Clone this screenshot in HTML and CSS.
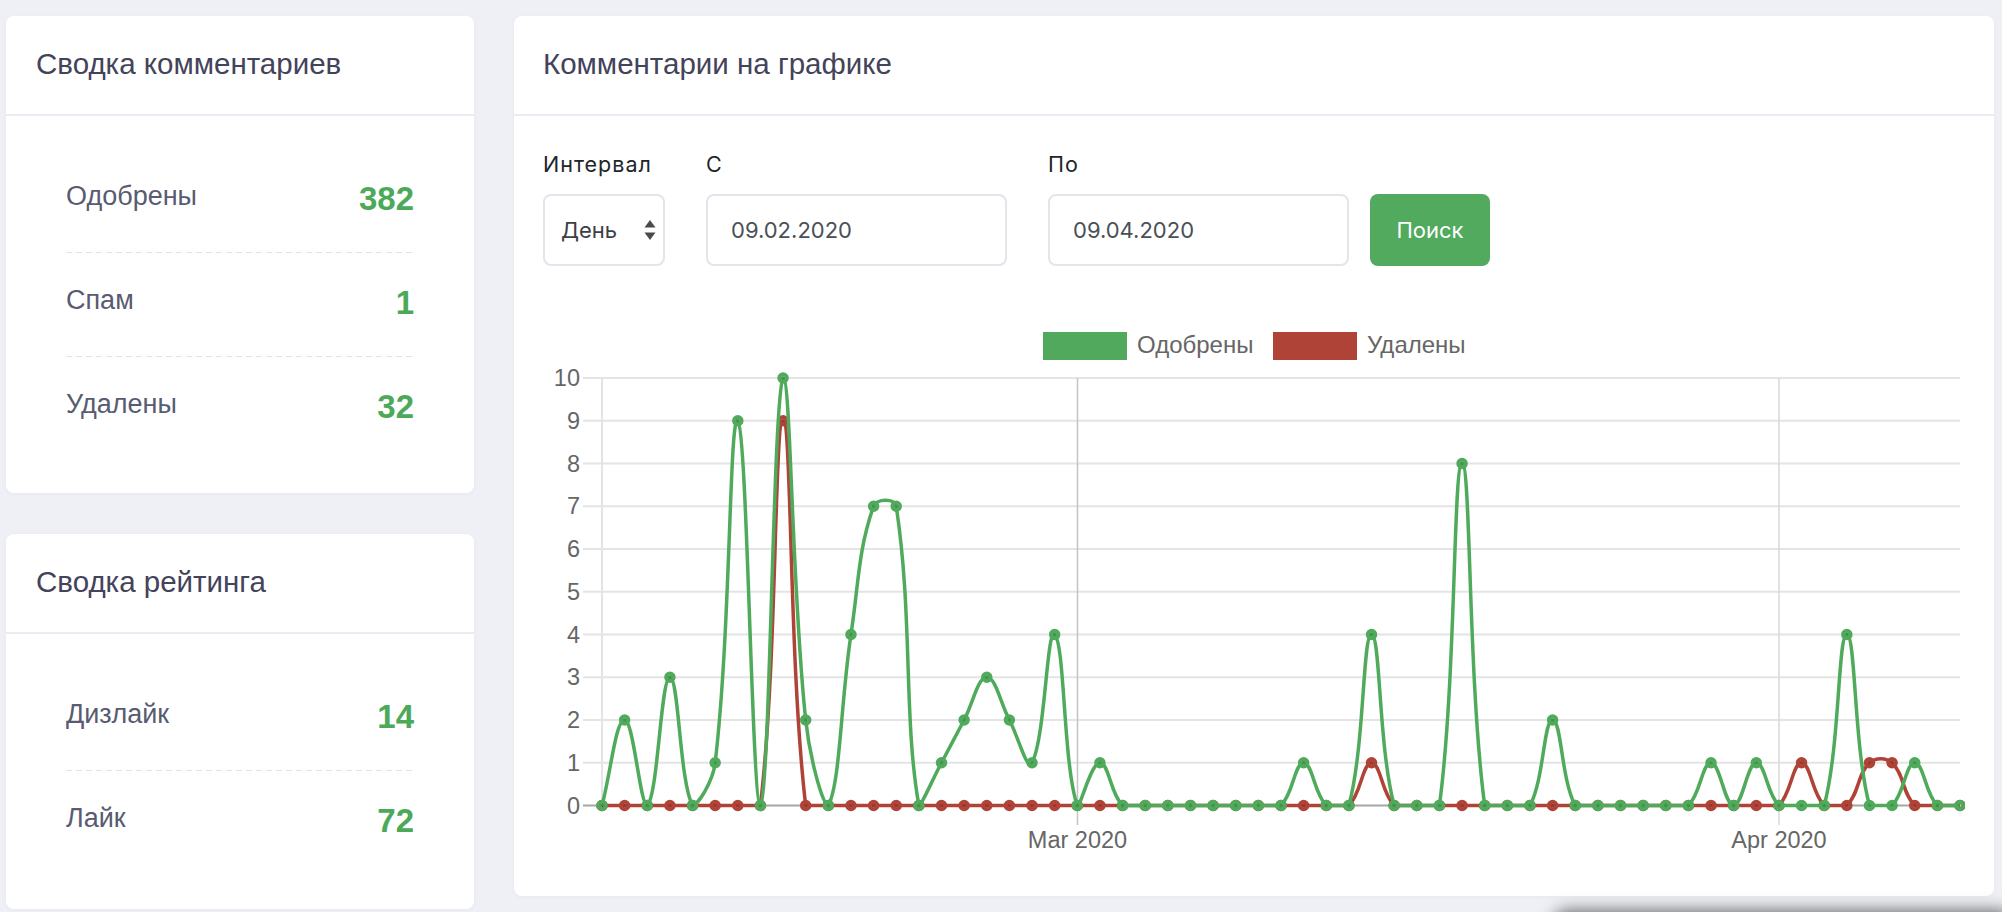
FILE: index.html
```html
<!DOCTYPE html>
<html lang="ru">
<head>
<meta charset="utf-8">
<title>Статистика комментариев</title>
<link rel="stylesheet" href="styles.css">
</head>
<body>
<div class="page">
  <aside class="side">
    <section class="card">
      <header class="card-header"><h2 class="card-title">Сводка комментариев</h2></header>
      <div class="stats">
        <div class="stat"><span class="stat-label">Одобрены</span><span class="stat-value">382</span></div>
        <div class="stat"><span class="stat-label">Спам</span><span class="stat-value">1</span></div>
        <div class="stat"><span class="stat-label">Удалены</span><span class="stat-value">32</span></div>
      </div>
    </section>
    <section class="card">
      <header class="card-header"><h2 class="card-title">Сводка рейтинга</h2></header>
      <div class="stats stats-rating">
        <div class="stat"><span class="stat-label">Дизлайк</span><span class="stat-value">14</span></div>
        <div class="stat"><span class="stat-label">Лайк</span><span class="stat-value">72</span></div>
      </div>
    </section>
  </aside>

  <main class="card card-chart">
    <header class="card-header card-header-wide"><h2 class="card-title">Комментарии на графике</h2></header>
    <div class="chart-body">
      <form class="filters">
        <div class="field field-interval">
          <label class="field-label">Интервал</label>
          <div class="control select">
            <span>День</span>
            <svg class="select-arrows" width="12" height="20" viewBox="0 0 12 20"><polygon points="6,0 11.5,7.5 0.5,7.5" fill="#4a4a4a"/><polygon points="0.5,12.5 11.5,12.5 6,20" fill="#4a4a4a"/></svg>
          </div>
        </div>
        <div class="field field-from">
          <label class="field-label">С</label>
          <input class="control input" type="text" value="09.02.2020">
        </div>
        <div class="field field-to">
          <label class="field-label">По</label>
          <input class="control input" type="text" value="09.04.2020">
        </div>
        <button class="btn-search" type="button">Поиск</button>
      </form>

      <div class="chart">
        <svg class="chart-svg" width="1422" height="560" viewBox="543 310 1422 560">
          <g class="legend">
            <rect x="1043" y="332" width="84" height="28" fill="#51a95d"/>
            <text class="tick legend-text" x="1137" y="353">Одобрены</text>
            <rect x="1273" y="332" width="84" height="28" fill="#b04337"/>
            <text class="tick legend-text" x="1367" y="353">Удалены</text>
          </g>
          <g class="grid">
            <line x1="583" x2="1960" y1="378" y2="378"/>
            <line x1="583" x2="1960" y1="420.75" y2="420.75"/>
            <line x1="583" x2="1960" y1="463.5" y2="463.5"/>
            <line x1="583" x2="1960" y1="506.25" y2="506.25"/>
            <line x1="583" x2="1960" y1="549" y2="549"/>
            <line x1="583" x2="1960" y1="591.75" y2="591.75"/>
            <line x1="583" x2="1960" y1="634.5" y2="634.5"/>
            <line x1="583" x2="1960" y1="677.25" y2="677.25"/>
            <line x1="583" x2="1960" y1="720" y2="720"/>
            <line x1="583" x2="1960" y1="762.75" y2="762.75"/>
            <line x1="602" x2="602" y1="378" y2="805.5"/>
          </g>
          <line class="major major-mar" x1="1077.5" x2="1077.5" y1="378" y2="825"/>
          <line class="major major-apr" x1="1779" x2="1779" y1="378" y2="825"/>
          <line class="zero" x1="583" x2="1960" y1="805.5" y2="805.5"/>
          <g class="ticks-y">
            <text class="tick" x="580" y="386">10</text>
            <text class="tick" x="580" y="428.75">9</text>
            <text class="tick" x="580" y="471.5">8</text>
            <text class="tick" x="580" y="514.25">7</text>
            <text class="tick" x="580" y="557">6</text>
            <text class="tick" x="580" y="599.75">5</text>
            <text class="tick" x="580" y="642.5">4</text>
            <text class="tick" x="580" y="685.25">3</text>
            <text class="tick" x="580" y="728">2</text>
            <text class="tick" x="580" y="770.75">1</text>
            <text class="tick" x="580" y="813.5">0</text>
          </g>
          <g class="ticks-x">
            <text class="tick" x="1077.5" y="848">Mar 2020</text>
            <text class="tick" x="1779" y="848">Apr 2020</text>
          </g>
          <g id="series"></g>
        </svg>
      </div>
    </div>
  </main>
</div>
<div class="float-shadow"></div>
<script src="chart-render.js"></script>
</body>
</html>
```

FILE: styles.css
```css
html, body {
  margin: 0;
  height: 100%;
  overflow: hidden;
}

body {
  background: #eff0f5;
  font-family: "Liberation Sans", Arial, Helvetica, sans-serif;
  color: #44445a;
}

.page {
  display: flex;
  align-items: flex-start;
  gap: 40px;
  padding: 16px 8px 0 6px;
}

.side {
  flex: none;
  width: 468px;
  display: flex;
  flex-direction: column;
  gap: 41px;
}

.card {
  background: #fff;
  border-radius: 8px;
  box-shadow: 0 1px 5px rgba(40, 40, 80, 0.04);
}

.card-header {
  padding: 31px 30px 33px;
  border-bottom: 2px solid #ebecf3;
}

.card-header-wide {
  padding-left: 29px;
}

.card-title {
  margin: 0;
  font-size: 29.5px;
  line-height: 34px;
  font-weight: 400;
  color: #43435a;
}

.stats {
  padding: 33px 60px 33px;
}

.stats-rating {
  padding-bottom: 35px;
}

.stat {
  display: flex;
  justify-content: space-between;
  align-items: flex-start;
  padding: 31px 0 40px;
}

.stat + .stat {
  padding-top: 32px;
  background: repeating-linear-gradient(90deg, #e2e4eb 0 6px, transparent 6px 10px) top left / 100% 1px no-repeat;
}

.stat-label {
  font-size: 27px;
  line-height: 32px;
  color: #585b71;
}

.stat-value {
  margin: 3px 0 -3px;
  font-size: 33px;
  line-height: 32px;
  font-weight: 700;
  color: #4ca95a;
}

.card-chart {
  flex: 1;
  min-width: 0;
}

.chart-body {
  padding: 36px 29px 26px;
}

.filters {
  display: flex;
  align-items: flex-end;
  margin: 0;
}

.field {
  display: flex;
  flex-direction: column;
  gap: 17px;
}

.field-interval { width: 122px; margin-right: 41px; }
.field-from { width: 301px; margin-right: 41px; }
.field-to { width: 301px; margin-right: 21px; }

.field-label {
  font-family: Inter, "Liberation Sans", sans-serif;
  font-size: 21.5px;
  line-height: 25px;
  letter-spacing: 1px;
  color: #212529;
  white-space: nowrap;
}

.control {
  box-sizing: border-box;
  height: 72px;
  border: 2px solid #e3e5eb;
  border-radius: 8px;
  background: #fff;
  font-family: Inter, "Liberation Sans", sans-serif;
  font-size: 22px;
}

.select {
  display: flex;
  align-items: center;
  justify-content: space-between;
  padding: 0 7px 0 16px;
  color: #3e3e44;
}

.select-arrows {
  display: block;
}

.input {
  width: 100%;
  padding: 0 0 0 23px;
  color: #495057;
  outline: none;
}

.btn-search {
  box-sizing: border-box;
  width: 120px;
  height: 72px;
  border: 0;
  border-radius: 8px;
  background: #52aa5e;
  color: #fff;
  font-family: Inter, "Liberation Sans", sans-serif;
  font-size: 22px;
  padding: 0;
}

.chart {
  margin-top: 44px;
}

.chart-svg {
  display: block;
}

.tick {
  font-family: "Liberation Sans", Arial, Helvetica, sans-serif;
  font-size: 23.5px;
  fill: #666;
}

.legend-text {
  font-size: 24px;
}

.ticks-y .tick {
  text-anchor: end;
}

.ticks-x .tick {
  text-anchor: middle;
}

.grid line {
  stroke: #e4e4e4;
  stroke-width: 2;
}

.major {
  stroke-width: 1.5;
}

.major-mar { stroke: #c4c4c4; }
.major-apr { stroke: #d8d8d8; }

.zero {
  stroke: #a6a6a6;
  stroke-width: 2;
}

.float-shadow {
  position: fixed;
  left: 1558px;
  top: 916px;
  width: 450px;
  height: 40px;
  border-radius: 10px;
  background: #777;
  box-shadow: 0 0 16px 6px rgba(0, 0, 0, 0.55);
}
```

FILE: chart-render.js
```js
(function () {
  var L = 602, R = 1960, T = 378, B = 805.5;
  var green = [0,2,0,3,0,1,9,0,10,2,0,4,7,7,0,1,2,3,2,1,4,0,1,0,0,0,0,0,0,0,0,1,0,0,4,0,0,0,8,0,0,0,2,0,0,0,0,0,0,1,0,1,0,0,0,4,0,0,1,0,0];
  var red = [];
  for (var k = 0; k < green.length; k++) red.push(0);
  red[8] = 9; red[34] = 1; red[53] = 1; red[56] = 1; red[57] = 1;

  var N = green.length, dx = (R - L) / (N - 1), dy = (B - T) / 10;
  var NS = 'http://www.w3.org/2000/svg';
  var g = document.getElementById('series');

  function cap(v, a, b) { return Math.max(Math.min(v, b), a); }

  function build(data, color) {
    var p = data.map(function (v, i) { return { x: L + i * dx, y: B - v * dy }; });
    for (var i = 0; i < p.length; i++) {
      var pr = p[i - 1] || p[i], c = p[i], nx = p[i + 1] || p[i];
      var d01 = Math.hypot(c.x - pr.x, c.y - pr.y);
      var d12 = Math.hypot(nx.x - c.x, nx.y - c.y);
      var s01 = d01 / (d01 + d12), s12 = d12 / (d01 + d12);
      if (isNaN(s01)) s01 = 0;
      if (isNaN(s12)) s12 = 0;
      var fa = 0.4 * s01, fb = 0.4 * s12;
      c.cpx = cap(c.x - fa * (nx.x - pr.x), L, R);
      c.cpy = cap(c.y - fa * (nx.y - pr.y), T, B);
      c.cnx = cap(c.x + fb * (nx.x - pr.x), L, R);
      c.cny = cap(c.y + fb * (nx.y - pr.y), T, B);
    }
    var d = 'M' + p[0].x + ' ' + p[0].y;
    for (var j = 1; j < p.length; j++) {
      d += ' C' + p[j - 1].cnx + ' ' + p[j - 1].cny + ' ' + p[j].cpx + ' ' + p[j].cpy + ' ' + p[j].x + ' ' + p[j].y;
    }
    var path = document.createElementNS(NS, 'path');
    path.setAttribute('d', d);
    path.setAttribute('fill', 'none');
    path.setAttribute('stroke', color);
    path.setAttribute('stroke-width', '3.5');
    path.setAttribute('stroke-linejoin', 'round');
    g.appendChild(path);
    p.forEach(function (pt) {
      var c = document.createElementNS(NS, 'circle');
      c.setAttribute('cx', pt.x);
      c.setAttribute('cy', pt.y);
      c.setAttribute('r', '3.75');
      c.setAttribute('fill', 'rgba(0,0,0,0.15)');
      c.setAttribute('stroke', color);
      c.setAttribute('stroke-width', '4');
      g.appendChild(c);
    });
  }

  build(red, '#b04337');
  build(green, '#4fab5b');
})();
```
